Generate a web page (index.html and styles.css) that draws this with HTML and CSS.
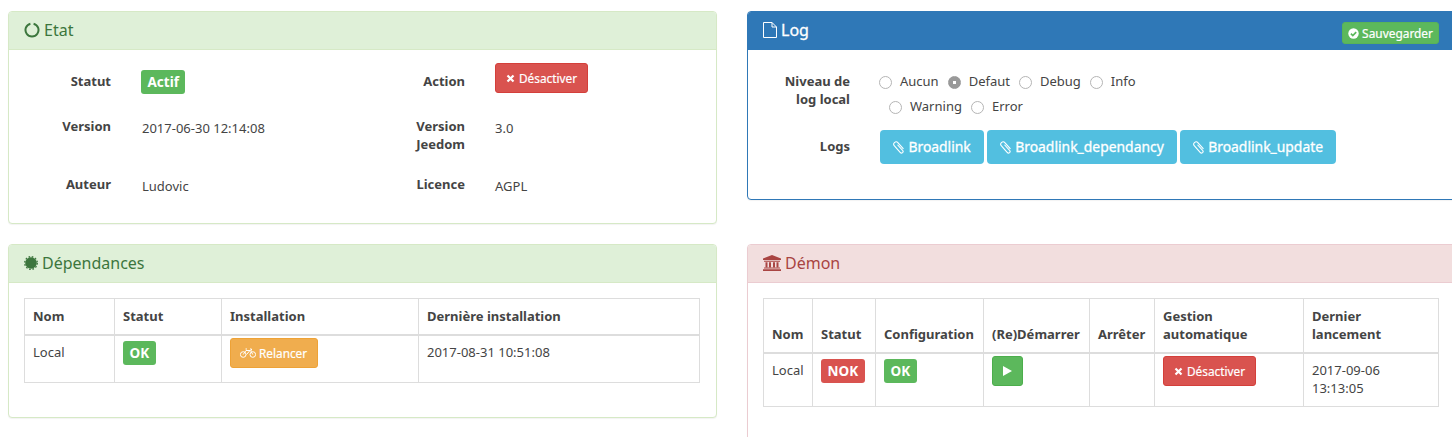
FILE: index.html
```html
<!DOCTYPE html>
<html lang="fr">
<head>
  <meta charset="UTF-8">
  <title>Broadlink</title>
  <link rel="stylesheet" href="styles.css">
</head>
<body>
  <div class="page">

    <!-- Etat -->
    <section class="panel panel-success panel-etat">
      <header class="panel-heading">
        <svg class="icon" width="16" height="16" viewBox="0 0 16 16"><path d="M6.400 1.700A6.500 6.500 0 1 0 9.600 1.700" fill="none" stroke="#3c763d" stroke-width="2"/></svg>
        <h3>Etat</h3>
      </header>
      <div class="info-grid">
        <div class="info-label first">Statut</div>
        <div class="info-value first"><span class="tag tag-green tag-actif">Actif</span></div>
        <div class="info-label first">Action</div>
        <div class="info-value action"><a class="btn btn-red"><svg class="btn-icon" width="9" height="9" viewBox="0 0 9 9"><path d="M1.500 1.500l6 6M7.500 1.500l-6 6" stroke="#fff" stroke-width="2.200"/></svg>Désactiver</a></div>

        <div class="info-label">Version</div>
        <div class="info-value">2017-06-30 12:14:08</div>
        <div class="info-label">Version Jeedom</div>
        <div class="info-value second">3.0</div>

        <div class="info-label">Auteur</div>
        <div class="info-value">Ludovic</div>
        <div class="info-label">Licence</div>
        <div class="info-value second">AGPL</div>
      </div>
    </section>

    <!-- Log -->
    <section class="panel panel-primary panel-log">
      <header class="panel-heading">
        <svg class="icon" width="14" height="16" viewBox="0 0 14 16"><path d="M.5.500h8.500l4.500 4.500v10.500H.5zM9 .5v4.500h4.500" fill="none" stroke="#fff" stroke-width="1"/></svg>
        <h3>Log</h3>
        <a class="btn-save"><svg class="btn-icon" width="11" height="11" viewBox="0 0 11 11"><circle cx="5.500" cy="5.500" r="5.200" fill="#fff"/><path d="M2.900 5.600l1.900 1.900 3.400-3.400" fill="none" stroke="#5cb85c" stroke-width="1.700"/></svg>Sauvegarder</a>
      </header>
      <div class="log-body">
        <div class="log-label">Niveau de log local</div>
        <div class="radios">
          <div class="radio-row">
            <label class="radio"><span class="dot"></span>Aucun</label>
            <label class="radio"><span class="dot checked"></span>Defaut</label>
            <label class="radio"><span class="dot"></span>Debug</label>
            <label class="radio"><span class="dot"></span>Info</label>
          </div>
          <div class="radio-row second-row">
            <label class="radio"><span class="dot"></span>Warning</label>
            <label class="radio"><span class="dot"></span>Error</label>
          </div>
        </div>
        <div class="log-label logs">Logs</div>
        <div class="log-buttons">
          <a class="btn-log"><svg class="btn-icon" width="11" height="13" viewBox="1 .8 10 11"><path d="M10.500 7.500L5.600 2C4.700 1 3.200 1 2.300 1.800 1.400 2.700 1.500 4 2.300 4.900L7.500 10.800C8.100 11.500 9.100 11.500 9.700 11 10.300 10.400 10.300 9.500 9.700 8.900L5.100 3.800" fill="none" stroke="#fff" stroke-width="1"/></svg>Broadlink</a>
          <a class="btn-log"><svg class="btn-icon" width="11" height="13" viewBox="1 .8 10 11"><path d="M10.500 7.500L5.600 2C4.700 1 3.200 1 2.300 1.800 1.400 2.700 1.500 4 2.300 4.900L7.500 10.800C8.100 11.500 9.100 11.500 9.700 11 10.300 10.400 10.300 9.500 9.700 8.900L5.100 3.800" fill="none" stroke="#fff" stroke-width="1"/></svg>Broadlink_dependancy</a>
          <a class="btn-log"><svg class="btn-icon" width="11" height="13" viewBox="1 .8 10 11"><path d="M10.500 7.500L5.600 2C4.700 1 3.200 1 2.300 1.800 1.400 2.700 1.500 4 2.300 4.900L7.500 10.800C8.100 11.500 9.100 11.500 9.700 11 10.300 10.400 10.300 9.500 9.700 8.900L5.100 3.800" fill="none" stroke="#fff" stroke-width="1"/></svg>Broadlink_update</a>
        </div>
      </div>
    </section>

    <!-- Dépendances -->
    <section class="panel panel-success panel-dep">
      <header class="panel-heading">
        <svg class="icon" width="14" height="14" viewBox="0 0 14 14"><circle cx="7" cy="7" r="5.800" fill="#3c763d"/><circle cx="7" cy="7" r="6.300" fill="none" stroke="#3c763d" stroke-width="1.300" stroke-dasharray="1.650 1.650"/></svg>
        <h3>Dépendances</h3>
      </header>
      <div class="table-wrap">
        <table class="table dep-table">
          <thead>
            <tr><th class="c-nom">Nom</th><th class="c-statut">Statut</th><th class="c-inst">Installation</th><th>Dernière installation</th></tr>
          </thead>
          <tbody>
            <tr>
              <td>Local</td>
              <td><span class="tag tag-green">OK</span></td>
              <td><a class="btn btn-orange"><svg class="btn-icon bike" width="16" height="10" viewBox="0 0 16 10"><g fill="none" stroke="#fff" stroke-width="1"><circle cx="3.200" cy="6.500" r="2.800"/><circle cx="12.800" cy="6.500" r="2.800"/><path d="M3.200 6.500L6 2.500h4.500l2.300 4M6.500 6.500L10 2.500M5.500 1h1.500M10 1h1.500v1.500"/></g></svg>Relancer</a></td>
              <td>2017-08-31 10:51:08</td>
            </tr>
          </tbody>
        </table>
      </div>
    </section>

    <!-- Démon -->
    <section class="panel panel-danger panel-demon">
      <header class="panel-heading">
        <svg class="icon" width="18" height="16" viewBox="0 0 18 16"><path d="M9 0l9 3.600V5H0V3.600zM1 5.800h16v1H1zM2.500 7.200h2v5h-2zM6 7.200h2v5H6zM10 7.200h2v5h-2zM13.500 7.200h2v5h-2zM1 12.600h16v1H1zM0 14.200h18V16H0z" fill="#a94442"/></svg>
        <h3>Démon</h3>
      </header>
      <div class="table-wrap">
        <table class="table demon-table">
          <thead>
            <tr>
              <th class="d-nom">Nom</th><th class="d-statut">Statut</th><th class="d-conf">Configuration</th><th class="d-start">(Re)Démarrer</th><th class="d-stop">Arrêter</th><th class="d-auto">Gestion automatique</th><th>Dernier lancement</th>
            </tr>
          </thead>
          <tbody>
            <tr>
              <td>Local</td>
              <td><span class="tag tag-red">NOK</span></td>
              <td><span class="tag tag-green">OK</span></td>
              <td><a class="btn btn-green"><svg width="9" height="10" viewBox="0 0 9 10"><path d="M0 0l9 5-9 5z" fill="#fff"/></svg></a></td>
              <td></td>
              <td><a class="btn btn-red"><svg class="btn-icon" width="9" height="9" viewBox="0 0 9 9"><path d="M1.500 1.500l6 6M7.500 1.500l-6 6" stroke="#fff" stroke-width="2.200"/></svg>Désactiver</a></td>
              <td>2017-09-06 13:13:05</td>
            </tr>
          </tbody>
        </table>
      </div>
    </section>

  </div>
</body>
</html>
```

FILE: styles.css
```css
/* General */
html, body {
  height: 100%;
  margin: 0;
  overflow: hidden;
  background: #fff;
}

body {
  font-family: "Noto Sans", sans-serif;
  font-size: 13px;
  line-height: 18px;
  color: #444;
}

.page {
  display: grid;
  grid-template-columns: 709px 709px;
  column-gap: 30px;
  row-gap: 20px;
  align-items: start;
  padding: 11px 0 0 8px;
}

/* Panels */
.panel {
  border: 1px solid transparent;
  border-radius: 4px;
  background: #fff;
  box-shadow: 0 1px 1px rgba(0, 0, 0, 0.05);
  box-sizing: border-box;
}

.panel-heading {
  display: flex;
  align-items: center;
  height: 38px;
  padding: 0 15px 2px;
  border-bottom: 1px solid transparent;
  border-radius: 3px 3px 0 0;
  box-sizing: border-box;
}

.panel-heading h3 {
  margin: 0;
  font-size: 16px;
  font-weight: 400;
}

.icon {
  margin-right: 4px;
  flex: none;
}

.panel-success { border-color: #d6e9c6; }
.panel-success .panel-heading { background: #dff0d8; border-color: #d6e9c6; color: #3c763d; }
.panel-primary { border-color: #2f78b7; }
.panel-primary .panel-heading { background: #2f78b7; border-color: #2f78b7; color: #fff; }
.panel-primary .panel-heading h3 { -webkit-text-stroke: 0.3px #fff; }
.panel-danger { border-color: #ebccd1; }
.panel-danger .panel-heading { background: #f2dede; border-color: #ebccd1; color: #a94442; }

.panel-etat { height: 213px; }
.panel-log { height: 189px; }
.panel-dep { height: 174px; }
.panel-demon { height: 260px; }

/* Etat info */
.info-grid {
  display: grid;
  grid-template-columns: 102px 261px 93px 1fr;
  grid-template-rows: 58px 58px 40px;
}

.info-label {
  padding-top: 9px;
  font-weight: 700;
  text-align: right;
}

.info-value {
  padding-top: 11px;
  padding-left: 31px;
}

.info-value.second { padding-left: 30px; }
.info-label.first { padding-top: 22px; }
.info-value.first { padding-top: 20px; }
.info-value.action { padding-top: 13px; padding-left: 30px; }

/* Log form */
.log-body {
  display: grid;
  grid-template-columns: 102px 1fr;
  column-gap: 30px;
  padding-top: 22px;
}

.log-label {
  padding-left: 15px;
  font-weight: 700;
  text-align: right;
}

.radios {
  display: flex;
  flex-direction: column;
  gap: 7px;
  margin-left: -1px;
}

.radio-row {
  display: flex;
  gap: 9px;
}

.second-row { margin-left: 10px; }

.radio {
  display: flex;
  align-items: center;
  height: 18px;
}

.dot {
  width: 13px;
  height: 13px;
  margin-right: 8px;
  border: 1px solid #b5b5b5;
  border-radius: 50%;
  background: #fff;
  box-sizing: border-box;
  position: relative;
  top: 1px;
}

.dot.checked {
  border-color: #999;
  background: radial-gradient(circle, #fff 0, #fff 1.5px, #999 2px);
}

.logs { padding-top: 22px; }

.log-buttons {
  display: flex;
  gap: 3px;
  margin-top: 15px;
}

.btn-log {
  display: flex;
  align-items: center;
  height: 34px;
  padding: 0 13px 0 13.400px;
  box-sizing: border-box;
  border-radius: 4px;
  background: #52bfe0;
  color: #fff;
  font-size: 13.9px;
  -webkit-text-stroke: 0.3px #fff;
}

.btn-icon { margin-right: 4px; flex: none; }

.btn-save {
  display: flex;
  align-items: center;
  align-self: flex-start;
  height: 22px;
  margin-top: 10px;
  margin-left: auto;
  margin-right: 1px;
  padding: 0 5px;
  box-sizing: border-box;
  border: 1px solid #58b358;
  border-radius: 3px;
  background: #5cb85c;
  color: #fff;
  font-size: 11.9px;
  -webkit-text-stroke: 0.2px #fff;
}

.btn-save .btn-icon { margin-right: 3px; }

/* Badges and buttons */
.tag {
  display: inline-block;
  padding: 3px 6.500px;
  border-radius: 3px;
  color: #fff;
  font-size: 13.5px;
  font-weight: 700;
  line-height: 18px;
}

.tag-actif { margin-left: -1px; }
.tag-green { background: #5cb85c; }
.tag-red { background: #d9534f; }

.btn {
  display: inline-flex;
  align-items: center;
  height: 30px;
  padding: 0 10px;
  box-sizing: border-box;
  border: 1px solid transparent;
  border-radius: 3px;
  color: #fff;
  font-size: 11.8px;
  -webkit-text-stroke: 0.2px #fff;
}

.btn-red { background: #d9534f; border-color: #d43f3a; }
.btn-orange { background: #f0ad4e; border-color: #eea236; }
.btn-green { background: #5cb85c; border-color: #4cae4c; }
.bike { margin-left: -1px; margin-right: 3px; }

/* Tables */
.table-wrap { padding: 15px; }

.table {
  width: 676px;
  border-collapse: collapse;
  table-layout: fixed;
}

.table th, .table td {
  padding: 7px 8px 8px;
  border: 1px solid #ddd;
  text-align: left;
  vertical-align: top;
  box-sizing: border-box;
}

.table th {
  padding: 8px 8px 9px;
  font-weight: 700;
  vertical-align: bottom;
  border-bottom-width: 2px;
}

.table .tag {
  display: block;
  width: fit-content;
  margin-top: -2px;
}

.table .btn {
  display: flex;
  width: fit-content;
  margin-top: -5px;
}

.dep-table td { height: 47px; }
.dep-table th { height: 36px; }
.c-nom { width: 90px; }
.c-statut { width: 107px; }
.c-inst { width: 197px; }

.demon-table td { height: 53px; }
.demon-table th { height: 54px; }
.d-nom { width: 49px; }
.d-statut { width: 63px; }
.d-conf { width: 108px; }
.d-start { width: 106px; }
.d-stop { width: 65px; }
.d-auto { width: 149px; }
```
